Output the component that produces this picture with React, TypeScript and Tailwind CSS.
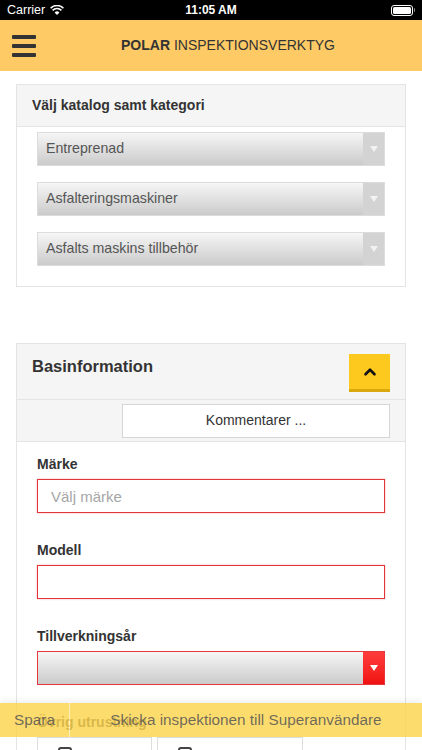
import { ChevronUp } from 'lucide-react';

const font = { fontFamily: '"Liberation Sans", Arial, sans-serif' };

function Select({ value, invalid = false }: { value?: string; invalid?: boolean }) {
  return (
    <div
      className={`flex h-[34px] border ${
        invalid ? 'border-[#e8353b]' : 'border-[#dcdcdc]'
      } bg-gradient-to-b from-[#f6f6f6] to-[#cbcbcb]`}
    >
      <div className="flex flex-1 items-center pl-[8px] text-[14.2px] text-[#555]">{value}</div>
      <div
        className={`flex w-[21px] items-center justify-center ${
          invalid ? 'bg-gradient-to-b from-[#ff3b3b] to-[#f01010]' : 'bg-[#d3d3d3]'
        }`}
      >
        <svg width="8" height="6" viewBox="0 0 8 6">
          <polygon points="0,0 8,0 4,6" fill={invalid ? '#fff' : '#f2f2f2'} />
        </svg>
      </div>
    </div>
  );
}

function Field({ label, children }: { label: string; children: React.ReactNode }) {
  return (
    <div className="mb-[27px]">
      <div className="mb-[5px] h-[20px] text-[14px] font-bold leading-[20px] text-[#333]">{label}</div>
      {children}
    </div>
  );
}

function CheckBox() {
  return <div className="mt-[9px] ml-[20px] h-[14px] w-[14px] rounded-[3px] border-2 border-[#444]" />;
}

export default function App() {
  return (
    <div className="relative h-[750px] w-full overflow-hidden bg-white" style={font}>
      {/* status bar */}
      <div className="flex h-[20px] items-center bg-black px-[7px] text-white">
        <div className="flex flex-1 items-center gap-[5px] text-[12.5px]">
          Carrier
          <svg width="14" height="10" viewBox="0 0 14 10">
            <path d="M7 10 L4.6 7.4 A3.4 3.4 0 0 1 9.4 7.4 Z" fill="#fff" />
            <path d="M2.6 5.4 A6.2 6.2 0 0 1 11.4 5.4" stroke="#fff" strokeWidth="1.6" fill="none" />
            <path d="M0.6 3.2 A9 9 0 0 1 13.4 3.2" stroke="#fff" strokeWidth="1.6" fill="none" />
          </svg>
        </div>
        <div className="text-[12px] font-semibold">11:05 AM</div>
        <div className="flex flex-1 justify-end">
          <div className="flex items-center">
            <div className="h-[11px] w-[22px] rounded-[3px] border border-white p-[1px]">
              <div className="h-full w-full rounded-[1.5px] bg-white" />
            </div>
            <div className="ml-[1px] h-[4px] w-[1.5px] rounded-r bg-[#888]" />
          </div>
        </div>
      </div>

      {/* header */}
      <div className="flex h-[51px] items-center bg-[#fdca66] pl-[12px]">
        <div className="flex flex-col gap-[5px]">
          <div className="h-[4px] w-[24px] rounded-[1px] bg-[#333]" />
          <div className="h-[4px] w-[24px] rounded-[1px] bg-[#333]" />
          <div className="h-[4px] w-[24px] rounded-[1px] bg-[#333]" />
        </div>
        <div className="flex-1 pr-[2px] text-center text-[14px] text-[#333]">
          <span className="font-bold">POLAR</span> INSPEKTIONSVERKTYG
        </div>
      </div>

      {/* catalog card */}
      <div className="mx-[16px] mt-[13px] border border-[#e4e4e4]">
        <div className="flex h-[42px] items-center border-b border-[#e4e4e4] bg-[#f5f5f5] pl-[15px] text-[14px] font-bold text-[#333]">
          Välj katalog samt kategori
        </div>
        <div className="flex flex-col gap-[16px] px-[20px] pt-[5px] pb-[20px]">
          <Select value="Entreprenad" />
          <Select value="Asfalteringsmaskiner" />
          <Select value="Asfalts maskins tillbehör" />
        </div>
      </div>

      {/* basinformation card */}
      <div className="mx-[16px] mt-[56px] border border-[#e4e4e4]">
        <div className="flex h-[56px] items-start justify-between border-b border-[#e4e4e4] bg-[#f5f5f5] pr-[15px] pl-[15px]">
          <div className="mt-[10px] text-[16.5px] font-bold text-[#333]">Basinformation</div>
          <button className="mt-[10px] flex h-[38px] w-[41px] items-center justify-center border-b-[3px] border-[#d8a80c] bg-[#fdc91f]">
            <ChevronUp size={18} strokeWidth={3.5} className="text-[#111]" />
          </button>
        </div>
        <div className="flex h-[42px] items-center border-b border-[#e4e4e4] bg-[#f5f5f5] pr-[15px] pl-[105px]">
          <button className="h-[34px] w-full border border-[#d6d6d6] bg-white text-[14px] text-[#333]">
            Kommentarer ...
          </button>
        </div>
        <div className="px-[20px] pt-[12px]">
          <Field label="Märke">
            <input
              placeholder="Välj märke"
              className="h-[34px] w-full border border-[#e0353b] px-[13px] text-[15px] text-[#555] shadow-[0_0_2px_rgba(224,53,59,0.35)] outline-none placeholder:text-[#a6a6a6]"
            />
          </Field>
          <Field label="Modell">
            <input className="h-[34px] w-full border border-[#e0353b] px-[13px] text-[15px] shadow-[0_0_2px_rgba(224,53,59,0.35)] outline-none" />
          </Field>
          <Field label="Tillverkningsår">
            <Select invalid />
          </Field>
          <div className="h-[20px] text-[14px] font-bold leading-[20px] text-[#333]">Övrig utrustning</div>
          <div className="mt-[5px] flex gap-[5px]">
            <div className="h-[60px] w-[115px] border border-[#dcdcdc]">
              <CheckBox />
            </div>
            <div className="h-[60px] w-[146px] border border-[#dcdcdc]">
              <CheckBox />
            </div>
          </div>
        </div>
      </div>

      {/* footer actions */}
      <div className="absolute top-[703px] left-0 flex h-[34px] w-full bg-[rgba(252,212,78,0.82)] text-[15.3px] text-[rgba(85,85,85,0.85)] shadow-[0_-3px_5px_rgba(0,0,0,0.06)]">
        <button className="w-[70px] border-r border-[rgba(255,255,255,0.55)]">Spara</button>
        <button className="flex-1">Skicka inspektionen till Superanvändare</button>
      </div>
    </div>
  );
}
